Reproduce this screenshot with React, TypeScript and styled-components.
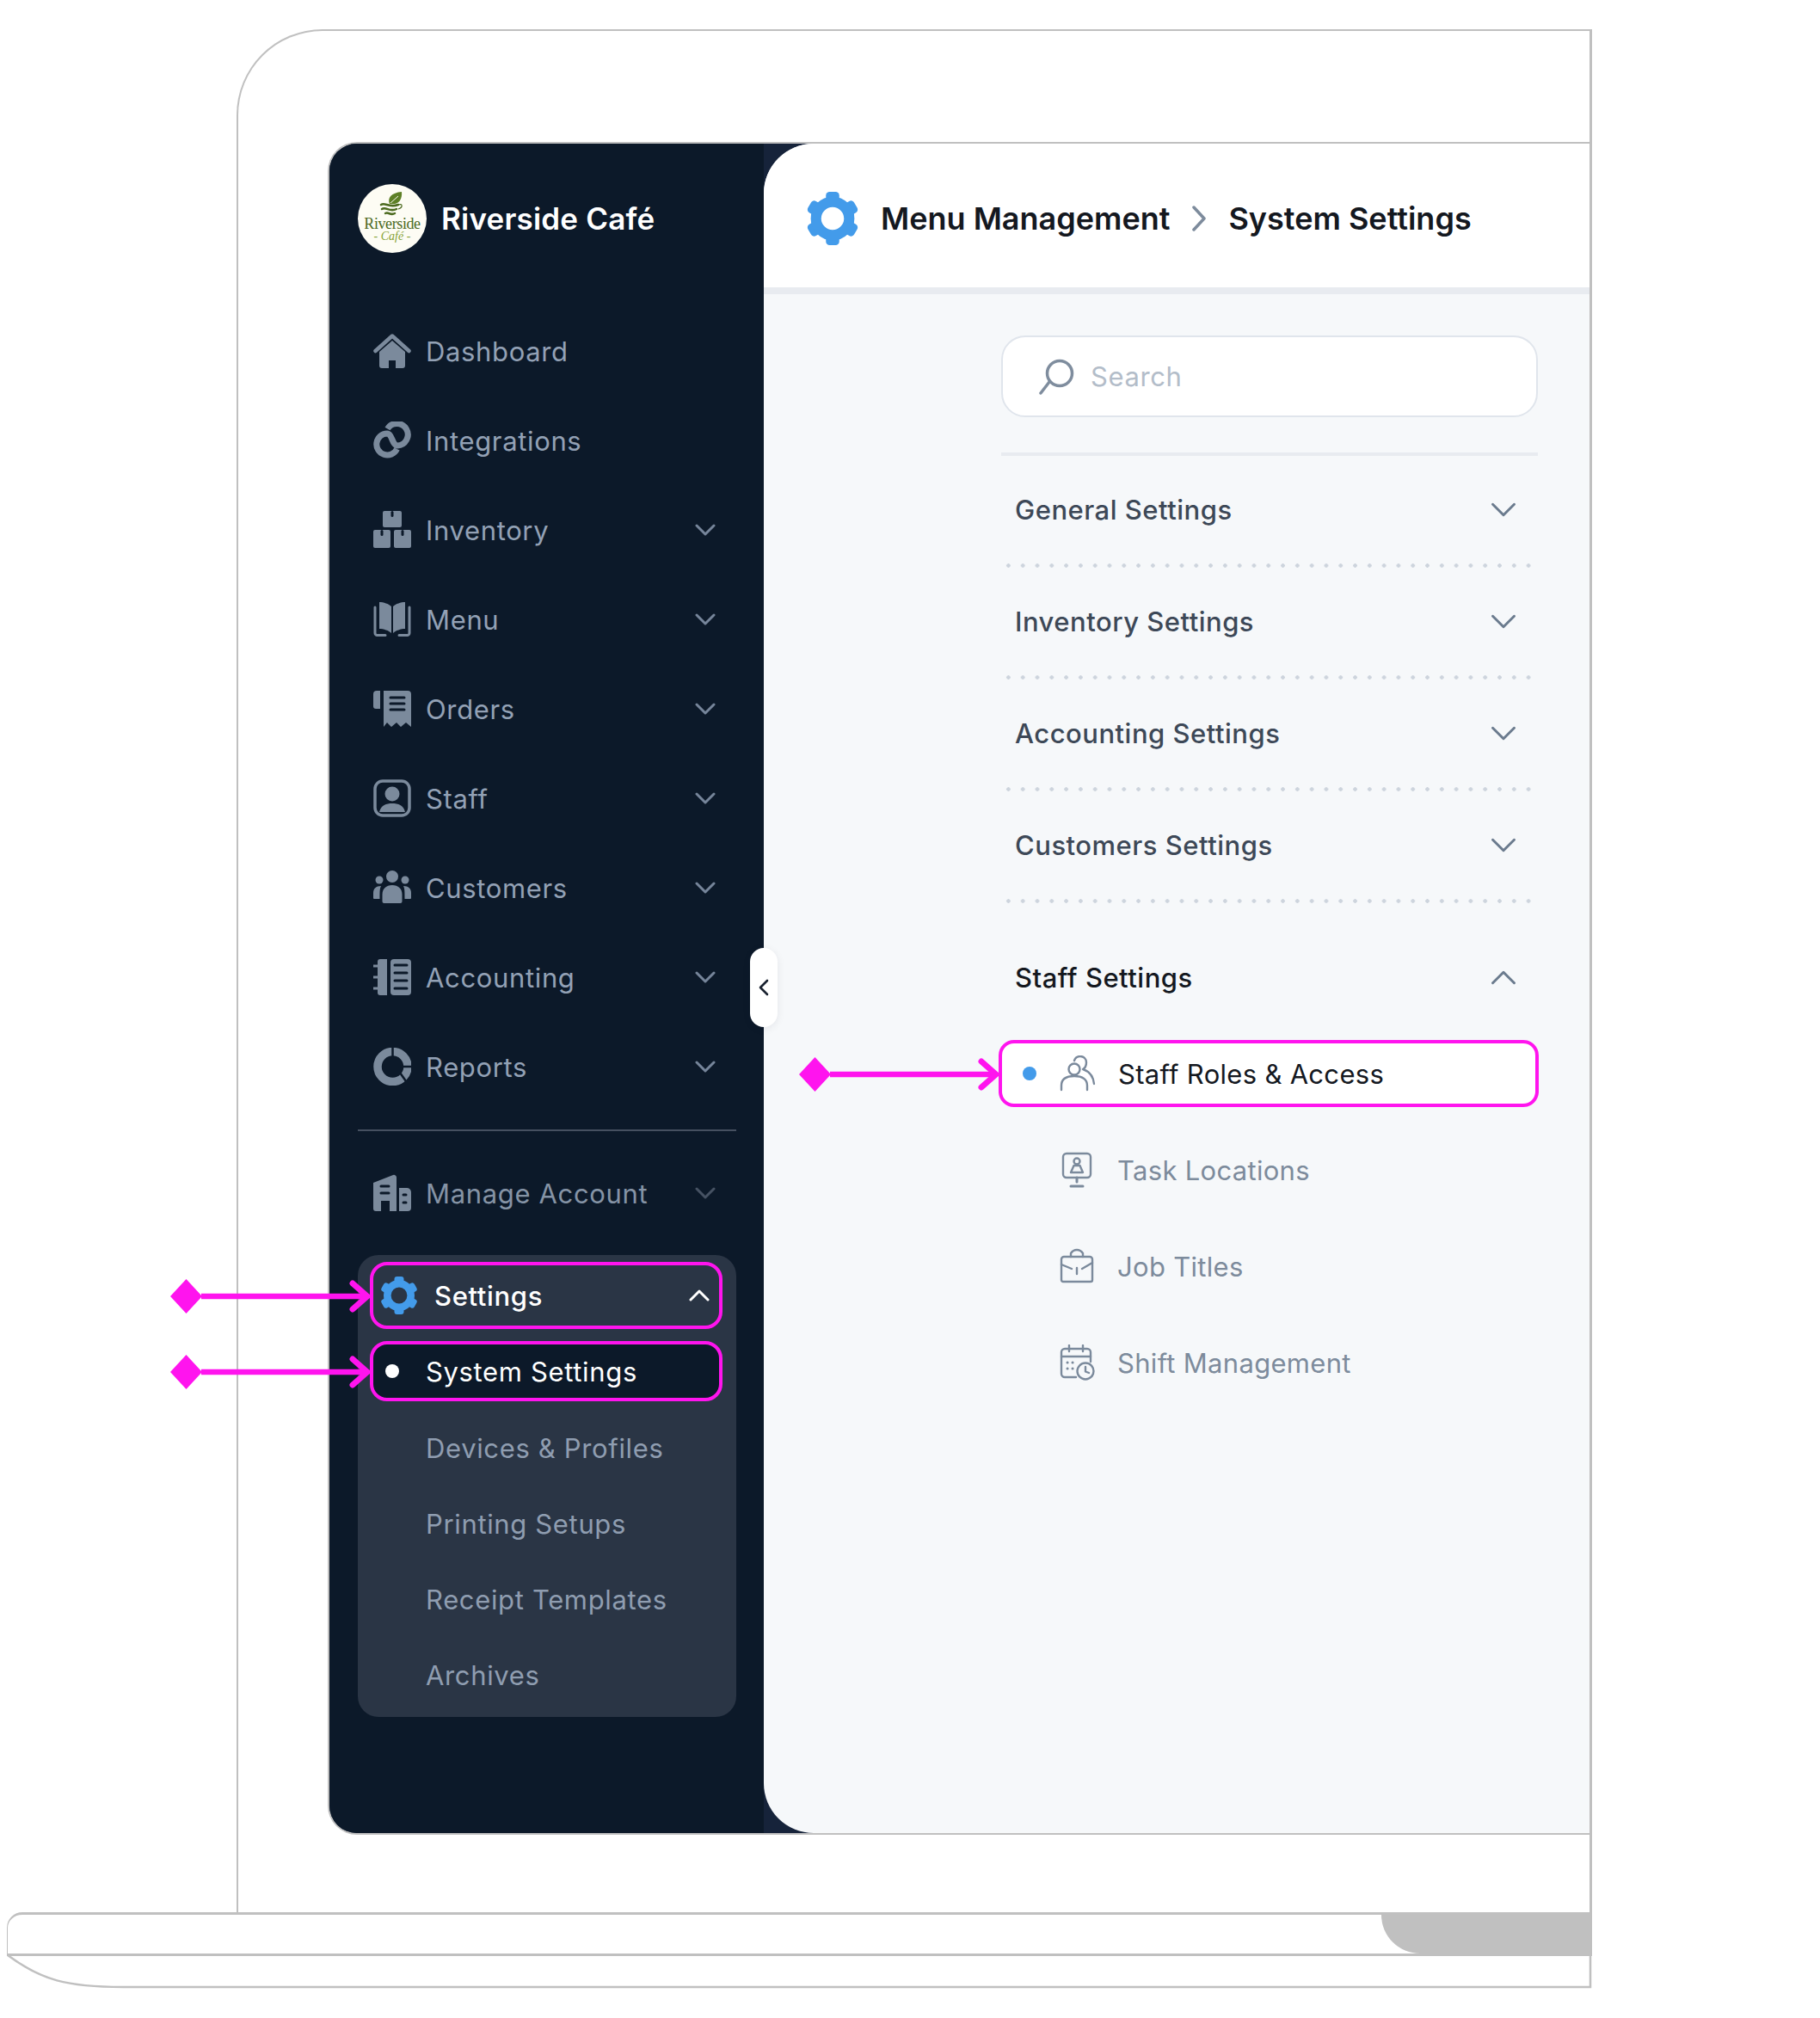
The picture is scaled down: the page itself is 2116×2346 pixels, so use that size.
import React from "react";
import styled, { createGlobalStyle } from "styled-components";

const BG = "#0c1929";
const MAGENTA = "#ff14ee";
const BLUE = "#439bea";
const FRAME = "#c0c0c0";

const GlobalStyle = createGlobalStyle`
  html, body { margin: 0; padding: 0; background: #fff; }
  body { font-family: Inter, "Noto Sans", "Liberation Sans", sans-serif; }
`;

const Stage = styled.div`
  position: relative;
  width: 2116px;
  height: 2346px;
  padding-top: 34px;
  box-sizing: border-box;
  overflow: hidden;
`;

const Lid = styled.div`
  box-sizing: border-box;
  margin-left: 275px;
  width: 1576px;
  height: 2189px;
  padding: 129px 0 0 104px;
  border: 2px solid ${FRAME};
  border-right-width: 3px;
  border-bottom: 0;
  border-top-left-radius: 100px;
`;

const Screen = styled.div`
  position: relative;
  box-sizing: border-box;
  display: flex;
  height: 1968px;
  border: 2px solid ${FRAME};
  border-right: 0;
  border-radius: 34px 0 0 34px;
  background: #16233a;
`;

const Sidebar = styled.aside`
  box-sizing: border-box;
  width: 505px;
  flex: none;
  padding: 47px 32px 0 33px;
  background: ${BG};
  border-radius: 32px 0 0 32px;
`;

const Brand = styled.div`
  display: flex;
  align-items: center;
  gap: 17px;
  margin-bottom: 62px;
`;

const LogoBadge = styled.div`
  width: 80px;
  height: 80px;
  flex: none;
  border-radius: 50%;
  background: #fdfcf4;
  display: flex;
  flex-direction: column;
  align-items: center;
  padding-top: 8px;
  box-sizing: border-box;
`;

const LogoWord = styled.span`
  font-family: "Liberation Serif", serif;
  font-size: 18px;
  line-height: 16px;
  letter-spacing: -0.4px;
  color: #4c6a1f;
`;

const LogoSub = styled.span`
  font-family: "Liberation Serif", serif;
  font-style: italic;
  font-size: 14px;
  line-height: 13px;
  color: #86a236;
`;

const BrandName = styled.div`
  font-size: 35px;
  font-weight: 600;
  color: #fff;
  letter-spacing: 0.2px;
`;

const NavRow = styled.div<{ $dim?: boolean }>`
  display: flex;
  align-items: center;
  height: 104px;
  padding: 0 24px 0 18px;
  color: ${(p) => (p.$dim ? "#8593a5" : "#93a1b5")};
  svg.chev { color: ${(p) => (p.$dim ? "#465263" : "#76859a")}; }
`;

const NavIcon = styled.span`
  width: 44px;
  height: 44px;
  flex: none;
  margin-right: 17px;
  color: #7b8a9c;
  display: block;
`;

const Label = styled.span`
  flex: 1;
  font-size: 31px;
  letter-spacing: 0.65px;
  white-space: nowrap;
`;

const NavDivider = styled.hr`
  border: 0;
  height: 2px;
  margin: 21px 0 20px;
  background: #465060;
`;

const SubPanel = styled.div`
  box-sizing: border-box;
  height: 537px;
  margin-top: 20px;
  padding: 8px 16px 0 14px;
  border-radius: 24px;
  background: #2a3545;
`;

const SettingsRow = styled.div`
  box-sizing: border-box;
  display: flex;
  align-items: center;
  height: 78px;
  padding: 0 11px 0 8px;
  border: 4px solid ${MAGENTA};
  border-radius: 20px;
  color: #fff;
  font-weight: 500;
`;

const SettingsLabel = styled(Label)`
  font-weight: 500;
`;

const SettingsIcon = styled(NavIcon)`
  color: ${BLUE};
  margin-right: 19px;
`;

const SystemRow = styled.div`
  box-sizing: border-box;
  display: flex;
  align-items: center;
  height: 70px;
  margin-top: 14px;
  padding-left: 14px;
  border: 4px solid ${MAGENTA};
  border-radius: 20px;
  background: ${BG};
  color: #fff;
`;

const Dot = styled.span<{ $color: string }>`
  width: 16px;
  height: 16px;
  flex: none;
  border-radius: 50%;
  background: ${(p) => p.$color};
`;

const SystemLabel = styled(Label)`
  margin-left: 31px;
`;

const SubList = styled.div`
  margin-top: 10px;
`;

const SubItem = styled.div`
  height: 88px;
  display: flex;
  align-items: center;
  padding-left: 65px;
  color: #8f9db0;
`;

const Main = styled.main`
  flex: 1;
  min-width: 0;
  display: flex;
  flex-direction: column;
  overflow: hidden;
  background: #f6f8fa;
  border-radius: 58px 0 0 58px;
`;

const Header = styled.header`
  box-sizing: border-box;
  height: 175px;
  flex: none;
  display: flex;
  align-items: center;
  padding: 6px 0 0 49px;
  background: #fff;
  border-bottom: 8px solid #e8ebf0;
`;

const HeaderGear = styled.span`
  width: 62px;
  height: 62px;
  flex: none;
  margin-right: 25px;
  color: ${BLUE};
`;

const Crumb = styled.span`
  font-size: 36px;
  font-weight: 600;
  color: #14181f;
  white-space: nowrap;
`;

const CrumbSep = styled.svg`
  width: 18px;
  height: 30px;
  margin: 0 25px;
  flex: none;
`;

const Content = styled.div`
  box-sizing: border-box;
  width: 624px;
  margin-left: 276px;
  padding-top: 48px;
`;

const SearchBox = styled.div`
  box-sizing: border-box;
  height: 95px;
  display: flex;
  align-items: center;
  gap: 18px;
  padding-left: 42px;
  border: 2px solid #e0e5ec;
  border-radius: 28px;
  background: #fff;
`;

const SearchHint = styled.span`
  font-size: 31px;
  letter-spacing: 0.6px;
  color: #b3bdc9;
`;

const SectionRule = styled.div`
  height: 4px;
  margin: 41px 0 0;
  background: #e8ebf0;
`;

const Accordion = styled.div<{ $open?: boolean }>`
  box-sizing: border-box;
  height: ${(p) => (p.$open ? "178px" : "130px")};
  display: flex;
  align-items: center;
  justify-content: space-between;
  padding: 0 25px 5px 16px;
  color: ${(p) => (p.$open ? "#14181f" : "#3d4857")};
  background: ${(p) =>
    p.$open ? "none" : "radial-gradient(circle, #cdd4dd 2px, transparent 2.5px) 0 100% / 16.8px 5px repeat-x"};
  svg.chev { color: #6b7b8e; }
`;

const AccordionTitle = styled.span`
  font-size: 31px;
  font-weight: 500;
  letter-spacing: 0.5px;
`;

const SubRows = styled.div`
  margin-top: -19px;
`;

const RoleRow = styled.div<{ $active?: boolean }>`
  box-sizing: border-box;
  position: relative;
  display: flex;
  align-items: center;
  height: ${(p) => (p.$active ? "78px" : "112px")};
  margin: ${(p) => (p.$active ? "0 -1px 17px -3px" : "0")};
  padding-left: ${(p) => (p.$active ? "24px" : "67px")};
  border: ${(p) => (p.$active ? `4px solid ${MAGENTA}` : "0")};
  border-radius: 18px;
  background: ${(p) => (p.$active ? "#fff" : "transparent")};
  color: ${(p) => (p.$active ? "#14181f" : "#7d8b9c")};
`;

const RoleLabel = styled(Label)`
  letter-spacing: 0.3px;
`;

const RoleIcon = styled.span<{ $active?: boolean }>`
  width: 42px;
  height: 42px;
  flex: none;
  margin-left: ${(p) => (p.$active ? "27px" : "0")};
  margin-right: 26px;
  color: #7b8a9c;
`;

const Collapse = styled.div`
  position: absolute;
  left: 489px;
  top: 935px;
  width: 32px;
  height: 92px;
  display: flex;
  align-items: center;
  justify-content: center;
  border-radius: 16px;
  background: #fff;
  box-shadow: 0 2px 10px rgba(20, 30, 50, 0.08);
`;

const Marker = styled.svg<{ $x: number; $y: number; $w: number }>`
  position: absolute;
  left: ${(p) => p.$x}px;
  top: ${(p) => p.$y - 22}px;
  width: ${(p) => p.$w}px;
  height: 44px;
`;

const Base = styled.div`
  position: relative;
  box-sizing: border-box;
  margin-left: 8px;
  width: 1843px;
  height: 51px;
  border: 3px solid ${FRAME};
  border-left-width: 1.5px;
  border-top-left-radius: 18px;
  overflow: hidden;
`;

const Notch = styled.div`
  position: absolute;
  right: 0;
  top: 0;
  width: 242px;
  height: 100%;
  background: ${FRAME};
  border-bottom-left-radius: 48px;
`;

const Lip = styled.svg`
  display: block;
  margin-left: 8px;
  width: 1843px;
  height: 40px;
  margin-top: -2px;
`;

function Chevron({ up, size = 24 }: { up?: boolean; size?: number }) {
  return (
    <svg className="chev" width={size} height={size / 2 + 2} viewBox="0 0 24 13" fill="none" stroke="currentColor" strokeWidth={size > 24 ? 2.4 : 3} strokeLinecap="round" strokeLinejoin="round">
      <path d={up ? "M2 11.5 12 1.5 22 11.5" : "M2 1.5 12 11.5 22 1.5"} />
    </svg>
  );
}

function Gear() {
  return (
    <svg width="100%" height="100%" viewBox="0 0 44 44" fill="currentColor">
      {[0, 60, 120, 180, 240, 300].map((a) => (
        <rect key={a} x="16.5" y="0" width="11" height="9" rx="3" transform={`rotate(${a} 22 22)`} />
      ))}
      <circle cx="22" cy="22" r="13.7" fill="none" stroke="currentColor" strokeWidth="8.6" />
    </svg>
  );
}

const Svg = ({ children }: { children: React.ReactNode }) => (
  <svg width="100%" height="100%" viewBox="0 0 44 44" fill="currentColor">
    {children}
  </svg>
);

const icons: Record<string, React.ReactNode> = {
  home: (
    <Svg>
      <path d="M2.5 22 22 4.5 41.500 22" fill="none" stroke="currentColor" strokeWidth="4.500" strokeLinecap="round" strokeLinejoin="round" />
      <path d="M7 23 22 10 37 23V39a3 3 0 0 1-3 3H26V33H18V42H10a3 3 0 0 1-3-3Z" />
    </Svg>
  ),
  link: (
    <Svg>
      <path
        d="M16.500 8.500A12.800 12.800 0 1 1 28 28C22 28 22 14 16 14A12.500 12.500 0 1 0 27.500 32"
        fill="none"
        stroke="currentColor"
        strokeWidth="7"
      />
    </Svg>
  ),
  boxes: (
    <Svg>
      <rect x="11" y="0" width="22" height="19" rx="2" />
      <rect x="0" y="22" width="20" height="21" rx="2" />
      <rect x="24" y="22" width="20" height="21" rx="2" />
      <g fill={BG}>
        <rect x="20.500" y="0" width="3" height="7" rx="1.500" />
        <rect x="8.500" y="22" width="3" height="7" rx="1.500" />
        <rect x="32.500" y="22" width="3" height="7" rx="1.500" />
      </g>
    </Svg>
  ),
  book: (
    <Svg>
      <path d="M7 2C12 2 18 4 21 7V38C18 35 12 33 7 33Z" />
      <path d="M37 2C32 2 26 4 23 7V38C26 35 32 33 37 33Z" />
      <path d="M2 8V38a2.500 2.500 0 0 0 2.500 2.500H14M42 8V38a2.500 2.500 0 0 1-2.500 2.500H30" fill="none" stroke="currentColor" strokeWidth="3" strokeLinecap="round" />
    </Svg>
  ),
  receipt: (
    <Svg>
      <path d="M4 1H8V22H3a3 3 0 0 1-3-3V5a4 4 0 0 1 4-4Z" />
      <path d="M12 1H40a4 4 0 0 1 4 4V43L38 38 32 43 27 38 21 43 16 38 12 43Z" />
      <path d="M20 9H36M20 16H36M20 23H36" stroke={BG} strokeWidth="3" fill="none" strokeLinecap="round" />
    </Svg>
  ),
  user: (
    <Svg>
      <rect x="2" y="2" width="40" height="40" rx="9" fill="none" stroke="currentColor" strokeWidth="3.500" />
      <circle cx="22" cy="17" r="8.500" />
      <path d="M7 38C9 30 15 28 22 28 29 28 35 30 37 38Z" />
    </Svg>
  ),
  people: (
    <Svg>
      <circle cx="22" cy="9" r="7" />
      <circle cx="7" cy="13" r="4.500" />
      <circle cx="37" cy="13" r="4.500" />
      <path d="M10.500 38V30C10.500 23 15 19 22 19 29 19 33.500 23 33.500 30V38a2 2 0 0 1-2 2H12.500a2 2 0 0 1-2-2Z" />
      <path d="M0 34V28C0 23 3 20 9 20 7.500 23 7.500 26 7.500 35H1a1 1 0 0 1-1-1Z" />
      <path d="M44 34V28C44 23 41 20 35 20 36.500 23 36.500 26 36.500 35H43a1 1 0 0 0 1-1Z" />
    </Svg>
  ),
  notebook: (
    <Svg>
      <path d="M5 4a3 3 0 0 1 3-3H16V43H8a3 3 0 0 1-3-3Z" />
      <path d="M0 9H5M0 22H5M0 35H5" stroke="currentColor" strokeWidth="3" strokeLinecap="round" />
      <rect x="20" y="1" width="24" height="42" rx="4" />
      <path d="M25 8H39M25 17H39M25 26H39M25 35H39" stroke={BG} strokeWidth="3" strokeLinecap="round" />
    </Svg>
  ),
  pie: (
    <Svg>
      <circle cx="22.500" cy="22" r="17.500" fill="none" stroke="currentColor" strokeWidth="9.500" />
      <path d="M22.500 0V13M31 22H44M31 29 38 39" stroke={BG} strokeWidth="2.500" />
    </Svg>
  ),
  building: (
    <Svg>
      <path d="M0 10 23 1a3 3 0 0 1 4 3V43H19V31H9V43H3a3 3 0 0 1-3-3Z" />
      <path d="M30 16H39a5 5 0 0 1 5 5V39a4 4 0 0 1-4 4H30Z" />
      <path d="M9 14H18M9 22H18M35 24H38M35 33H38" stroke={BG} strokeWidth="3" strokeLinecap="round" />
    </Svg>
  ),
};

const lineProps = { fill: "none", stroke: "currentColor", strokeWidth: 2.4, strokeLinecap: "round" as const, strokeLinejoin: "round" as const };

const roleIcons: Record<string, React.ReactNode> = {
  staff: (
    <svg width="100%" height="100%" viewBox="0 0 42 42" {...lineProps}>
      <circle cx="17" cy="16" r="6.500" />
      <path d="M2 40V35C2 28 7 24 17 24 27 24 32 28 32 35V40" />
      <path d="M17 6C18 3 21 1 24 1 28 1 31 4 31 8 31 12 29 15 27 16 33 18 39 23 40 33" />
    </svg>
  ),
  task: (
    <svg width="100%" height="100%" viewBox="0 0 42 42" {...lineProps}>
      <rect x="5" y="2" width="32" height="28" rx="4" />
      <circle cx="21" cy="11" r="3.500" />
      <path d="M14 24 17.500 16H24.500L28 24Z" />
      <path d="M21 30V35M14 40H28" strokeWidth="3" />
    </svg>
  ),
  job: (
    <svg width="100%" height="100%" viewBox="0 0 42 42" {...lineProps}>
      <path d="M3 13a3 3 0 0 1 3-3H36a3 3 0 0 1 3 3V37a2 2 0 0 1-2 2H5a2 2 0 0 1-2-2Z" />
      <path d="M14 10V6C16 3 18 2 21 2 24 2 26 3 28 6V10" />
      <path d="M3 19 15 24M39 17 27 24M21 23V30" />
    </svg>
  ),
  shift: (
    <svg width="100%" height="100%" viewBox="0 0 42 42" {...lineProps}>
      <path d="M20 38H7a4 4 0 0 1-4-4V9a4 4 0 0 1 4-4H33a4 4 0 0 1 4 4V20" />
      <path d="M3 14H37M12 1V8M28 1V8" />
      <path d="M10 21H10.100M16 21H16.100M10 28H10.100M16 28H16.100" strokeWidth="3" />
      <circle cx="31" cy="31" r="9.500" />
      <path d="M31 26V31.500L35 33" />
    </svg>
  ),
};

function Arrow({ x, y, w }: { x: number; y: number; w: number }) {
  return (
    <Marker $x={x} $y={y} $w={w} viewBox={`0 0 ${w} 44`}>
      <polygon points="0,22 18.500,2 37,22 18.500,42" fill={MAGENTA} />
      <path d={`M36 22H${w - 3}`} stroke={MAGENTA} strokeWidth="6.500" />
      <path d={`M${w - 20} 7 ${w - 3} 22 ${w - 20} 37`} fill="none" stroke={MAGENTA} strokeWidth="7" strokeLinecap="round" strokeLinejoin="round" />
    </Marker>
  );
}

const navItems: { label: string; icon: string; chevron?: boolean }[] = [
  { label: "Dashboard", icon: "home" },
  { label: "Integrations", icon: "link" },
  { label: "Inventory", icon: "boxes", chevron: true },
  { label: "Menu", icon: "book", chevron: true },
  { label: "Orders", icon: "receipt", chevron: true },
  { label: "Staff", icon: "user", chevron: true },
  { label: "Customers", icon: "people", chevron: true },
  { label: "Accounting", icon: "notebook", chevron: true },
  { label: "Reports", icon: "pie", chevron: true },
];

const subItems = ["Devices & Profiles", "Printing Setups", "Receipt Templates", "Archives"];
const sections = ["General Settings", "Inventory Settings", "Accounting Settings", "Customers Settings"];

export default function App() {
  return (
    <>
      <GlobalStyle />
      <Stage>
        <Lid>
          <Screen>
            <Sidebar>
              <Brand>
                <LogoBadge>
                  <svg width="30" height="30" viewBox="0 0 30 30">
                    <path d="M12 15C9 8 14 2 26 1 27 10 22 17 12 15Z" fill="#5d7f25" />
                    <path d="M13 14 22 6" stroke="#fdfcf4" strokeWidth="1" />
                    <path d="M2 16C7 13 11 20 22 16M3 21C8 18 12 25 20 21M7 26C11 24 13 29 18 26" fill="none" stroke="#4c6a1f" strokeWidth="2.500" strokeLinecap="round" />
                    <path d="M22 16C27 14 28 19 22 21" fill="none" stroke="#4c6a1f" strokeWidth="1.200" />
                  </svg>
                  <LogoWord>Riverside</LogoWord>
                  <LogoSub>- Café -</LogoSub>
                </LogoBadge>
                <BrandName>Riverside Café</BrandName>
              </Brand>

              {navItems.map((item) => (
                <NavRow key={item.label}>
                  <NavIcon>{icons[item.icon]}</NavIcon>
                  <Label>{item.label}</Label>
                  {item.chevron && <Chevron />}
                </NavRow>
              ))}

              <NavDivider />

              <NavRow $dim>
                <NavIcon>{icons.building}</NavIcon>
                <Label>Manage Account</Label>
                <Chevron />
              </NavRow>

              <SubPanel>
                <SettingsRow>
                  <SettingsIcon>
                    <Gear />
                  </SettingsIcon>
                  <SettingsLabel>Settings</SettingsLabel>
                  <Chevron up />
                </SettingsRow>
                <SystemRow>
                  <Dot $color="#fff" />
                  <SystemLabel>System Settings</SystemLabel>
                </SystemRow>
                <SubList>
                  {subItems.map((s) => (
                    <SubItem key={s}>
                      <Label>{s}</Label>
                    </SubItem>
                  ))}
                </SubList>
              </SubPanel>
            </Sidebar>

            <Main>
              <Header>
                <HeaderGear>
                  <Gear />
                </HeaderGear>
                <Crumb>Menu Management</Crumb>
                <CrumbSep viewBox="0 0 18 30" fill="none" stroke="#7d8b9c" strokeWidth="3.500" strokeLinecap="round" strokeLinejoin="round">
                  <path d="M3 2 15 15 3 28" />
                </CrumbSep>
                <Crumb>System Settings</Crumb>
              </Header>

              <Content>
                <SearchBox>
                  <svg width="42" height="42" viewBox="0 0 42 42" fill="none" stroke="#7f8d9e" strokeWidth="3.500" strokeLinecap="round">
                    <circle cx="24" cy="17" r="14.500" />
                    <path d="M2 40 12 27" />
                  </svg>
                  <SearchHint>Search</SearchHint>
                </SearchBox>
                <SectionRule />

                {sections.map((s) => (
                  <Accordion key={s}>
                    <AccordionTitle>{s}</AccordionTitle>
                    <Chevron size={30} />
                  </Accordion>
                ))}
                <Accordion $open>
                  <AccordionTitle>Staff Settings</AccordionTitle>
                  <Chevron up size={30} />
                </Accordion>

                <SubRows>
                  <RoleRow $active>
                    <Dot $color={BLUE} />
                    <RoleIcon $active>{roleIcons.staff}</RoleIcon>
                    <RoleLabel>Staff Roles &amp; Access</RoleLabel>
                  </RoleRow>
                  <RoleRow>
                    <RoleIcon>{roleIcons.task}</RoleIcon>
                    <RoleLabel>Task Locations</RoleLabel>
                  </RoleRow>
                  <RoleRow>
                    <RoleIcon>{roleIcons.job}</RoleIcon>
                    <RoleLabel>Job Titles</RoleLabel>
                  </RoleRow>
                  <RoleRow>
                    <RoleIcon>{roleIcons.shift}</RoleIcon>
                    <RoleLabel>Shift Management</RoleLabel>
                  </RoleRow>
                </SubRows>
              </Content>
            </Main>

            <Collapse>
              <svg width="12" height="20" viewBox="0 0 12 20" fill="none" stroke="#1a2230" strokeWidth="2.600" strokeLinecap="round" strokeLinejoin="round">
                <path d="M10 2 2 10 10 18" />
              </svg>
            </Collapse>
          </Screen>
        </Lid>

        <Base>
          <Notch />
        </Base>
        <Lip viewBox="0 0 1843 40" fill="none" stroke={FRAME} strokeWidth="2.500">
          <path d="M1 1C40 30 70 38 135 38H1841V0" />
        </Lip>

        <Arrow x={198} y={1507} w={232} />
        <Arrow x={198} y={1595} w={232} />
        <Arrow x={929} y={1249} w={232} />
      </Stage>
    </>
  );
}
